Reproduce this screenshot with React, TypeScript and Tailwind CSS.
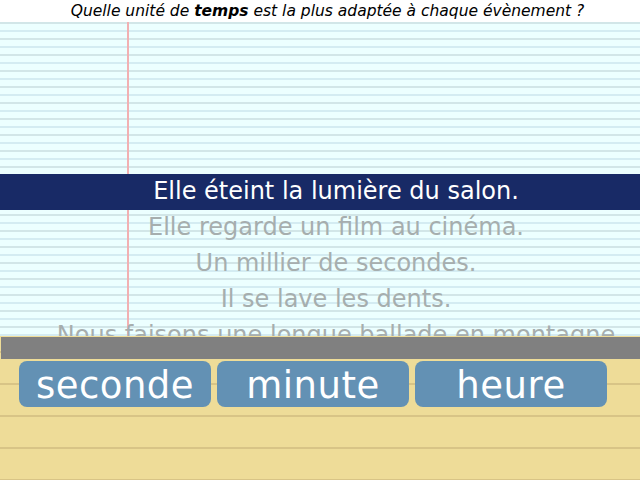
const phrases = [
  'Elle éteint la lumière du salon.',
  'Elle regarde un film au cinéma.',
  'Un millier de secondes.',
  'Il se lave les dents.',
  'Nous faisons une longue ballade en montagne',
];

const units = ['seconde', 'minute', 'heure'];

export default function App() {
  return (
    <div className="w-[640px] h-[480px] flex flex-col overflow-hidden bg-white font-['DejaVu_Sans',sans-serif]">
      <div className="h-[22px] shrink-0 flex items-center justify-center pt-px pl-[15px] text-[15.5px] italic text-black">
        <span>
          Quelle unité de <b>temps</b> est la plus adaptée à chaque évènement ?
        </span>
      </div>

      <div className="h-[314px] shrink-0 overflow-hidden bg-[#ecffff] bg-[linear-gradient(to_right,transparent_127px,#f2b0b2_127px,#f2b0b2_129px,transparent_129px),repeating-linear-gradient(to_bottom,#d2e6e8_0px,#d2e6e8_2px,transparent_2px,transparent_8px,#d4ecf2_8px,#d4ecf2_10px,transparent_10px,transparent_16px)] pt-[152px]">
        {phrases.map((p, i) => (
          <div
            key={p}
            className={`h-[36px] flex items-center justify-center pl-[32px] pb-[2px] whitespace-nowrap text-[24px] ${
              i === 0 ? 'bg-[#182a66] text-white' : 'text-[#a6aeae]'
            }`}
          >
            {p}
          </div>
        ))}
      </div>

      <div className="flex-1 bg-[#eedc98] bg-[repeating-linear-gradient(to_bottom,transparent_0px,transparent_15px,#d8c486_15px,#d8c486_17px,transparent_17px,transparent_32px)] pl-px pt-px">
        <div className="h-[22px] bg-[#808080]" />
        <div className="flex gap-[6px] pl-[18px] pt-[2px]">
          {units.map((u) => (
            <button
              key={u}
              className="w-[192px] h-[46px] rounded-lg bg-[#6391b4] text-white text-[37px] tracking-[0.5px] leading-none flex items-center justify-center pt-[3px]"
            >
              {u}
            </button>
          ))}
        </div>
      </div>
    </div>
  );
}
